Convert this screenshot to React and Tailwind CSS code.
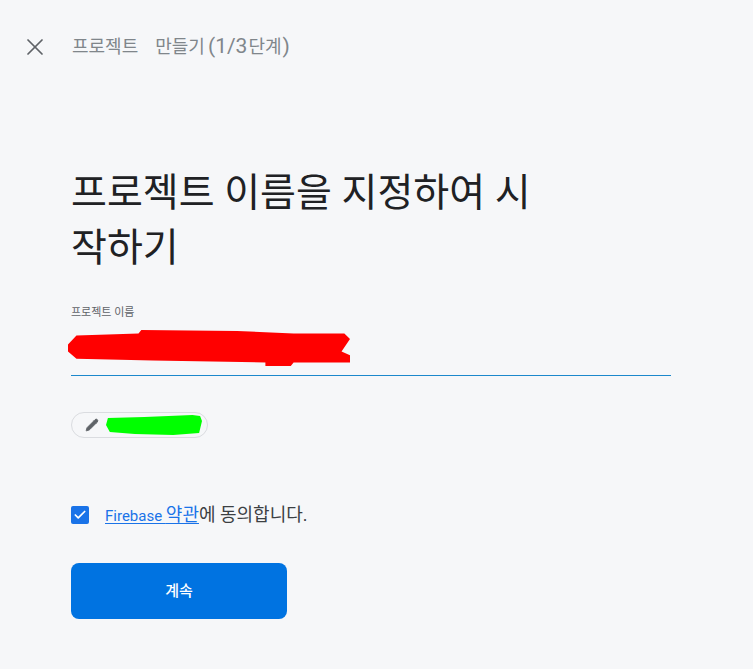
import { Pencil, X, Check } from 'lucide-react';

function Scribble({ className, color, d }) {
    return (
        <svg viewBox="0 0 100 20" preserveAspectRatio="none" className={className}>
            <path d={d} fill={color} />
        </svg>
    );
}

export default function App() {
    return (
        <div
            className="min-h-screen w-full bg-[#f6f7f9] text-[#202124]"
            style={{ fontFamily: 'Roboto, "Noto Sans CJK KR", sans-serif' }}
        >
            {/* header */}
            <div className="flex h-[94px] items-center">
                <button className="ml-[21px] flex h-[28px] w-[28px] items-center justify-center text-[#5f6368]">
                    <X size={28} strokeWidth={1.5} />
                </button>
                <span className="ml-[23px] flex items-baseline text-[18px] text-[#80868b]">
                    <span>프로젝트</span>
                    <span className="ml-[17px]">만들기</span>
                    <span className="ml-[3px] text-[21px]">(1/3</span>
                    <span className="ml-[1px]">단계</span>
                    <span className="ml-[1px] text-[21px]">)</span>
                </span>
            </div>

            <div className="ml-[71px] w-[600px]">
                <h1 className="mt-[72px] text-[39px] leading-[55px] text-[#202124]">
                    프로젝트 이름을 지정하여 시<br />작하기
                </h1>

                {/* input */}
                <div className="mt-[30px]">
                    <label className="block text-[11px] leading-[13px] text-[#5f6368]">
                        프로젝트 이름
                    </label>
                    <div className="flex h-[57px] items-center border-b border-[#1c88cc] pt-[2px]">
                        <Scribble
                            className="h-[36px] w-[282px] -ml-[3px]"
                            color="#ff0000"
                            d="M0 8 L3 3 L25 2 L26 0 L60 0.5 L80 2 L98 2 L100 5 L97 12 L100 14 L100 18 L80 18 L79 20 L70 20 L70 18 L30 17 L3 16 L0 12 Z"
                        />
                    </div>
                </div>

                {/* chip */}
                <div className="mt-[36px] flex h-[26px] w-[137px] items-center rounded-full border border-[#dadce0] pl-[13px]">
                    <Pencil size={14} className="text-[#5f6368]" fill="#5f6368" strokeWidth={1.5} />
                    <Scribble
                        className="ml-[7px] h-[20px] w-[96px]"
                        color="#00ff00"
                        d="M2 3 L40 2 L90 0 L98 1 L100 6 L97 18 L70 20 L30 19 L4 17 L0 10 Z"
                    />
                </div>

                {/* checkbox */}
                <div className="mt-[63px] flex items-center">
                    <span className="flex h-[18px] w-[18px] items-center justify-center rounded-[2px] bg-[#1a73e8]">
                        <Check size={14} strokeWidth={3} className="text-white" />
                    </span>
                    <span className="ml-[16px] flex items-baseline text-[15px] text-[#3c4043]">
                        <a className="text-[#1a73e8] underline underline-offset-2">
                            Firebase <span className="text-[18px]">약관</span>
                        </a>
                        <span className="text-[18px]">에 동의합니다.</span>
                    </span>
                </div>

                {/* button */}
                <button className="mt-[35px] flex h-[56px] w-[216px] items-center justify-center rounded-[8px] bg-[#0073e1] text-[15px] font-medium text-white">
                    계속
                </button>
            </div>
        </div>
    );
}
